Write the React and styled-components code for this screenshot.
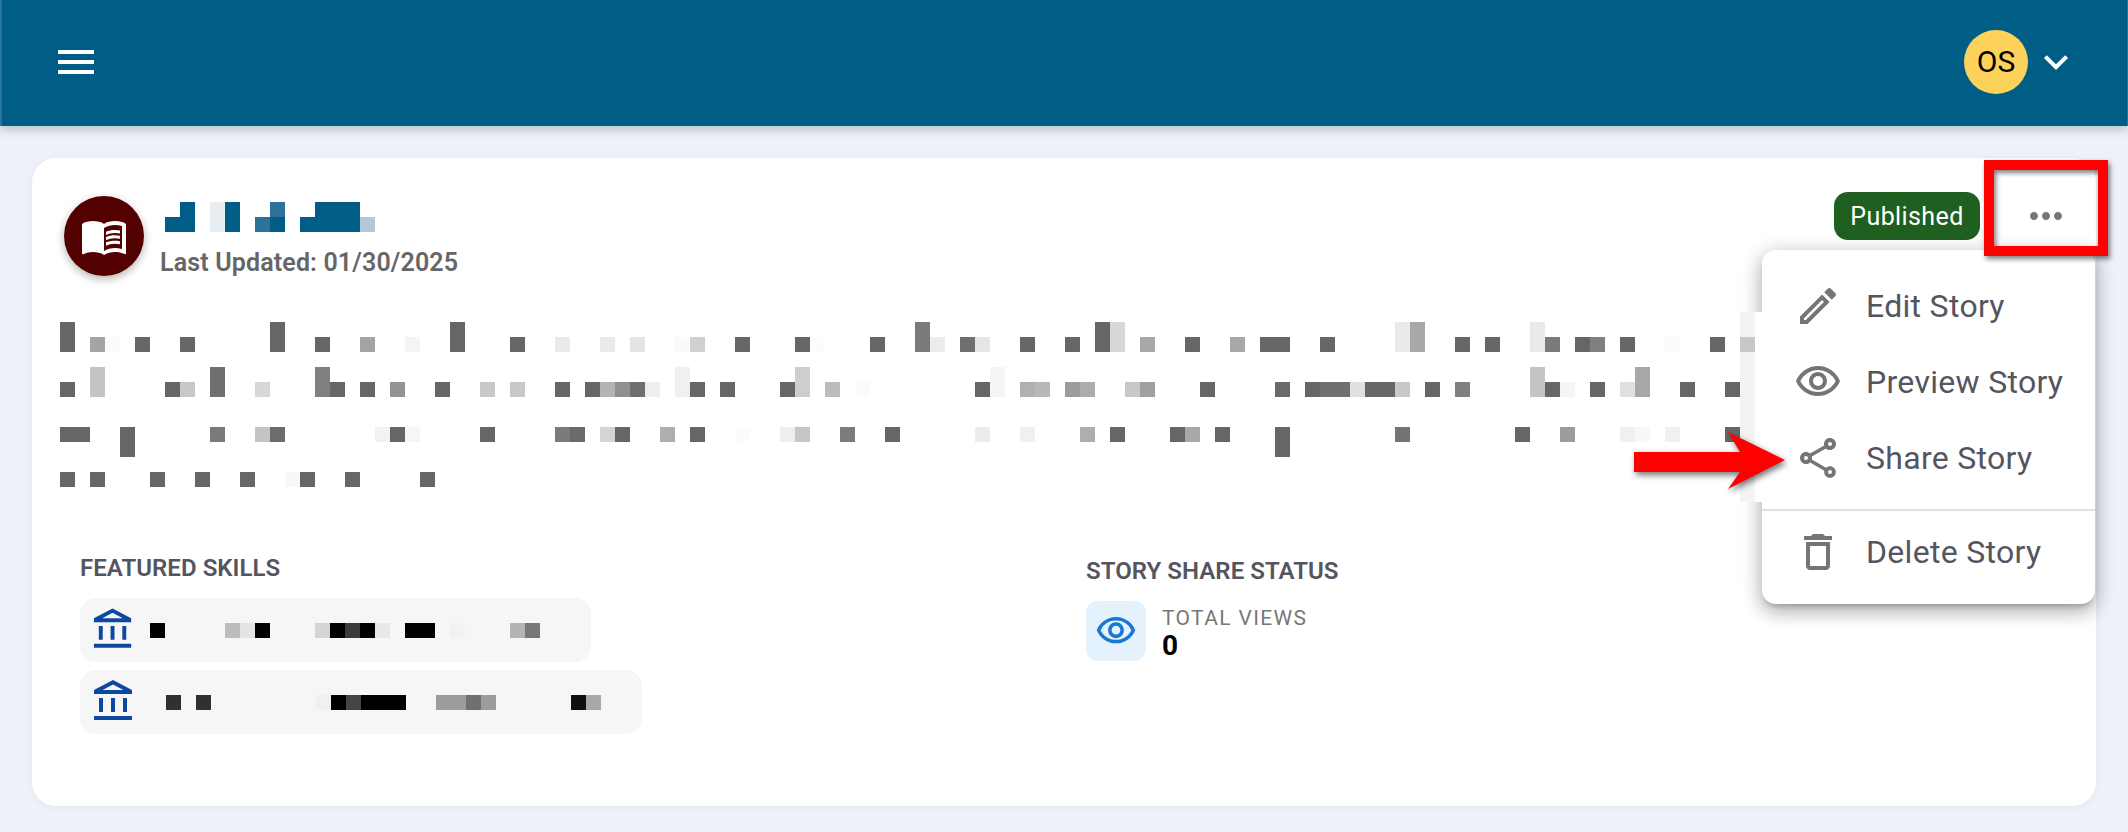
import styled, { createGlobalStyle } from "styled-components";
import {
  MdMenu,
  MdExpandMore,
  MdMenuBook,
  MdMoreHoriz,
  MdOutlineEdit,
  MdOutlineVisibility,
  MdOutlineShare,
  MdOutlineDelete,
  MdOutlineAccountBalance,
} from "react-icons/md";

const GlobalStyle = createGlobalStyle`
  html, body {
    margin: 0;
    padding: 0;
    background: #eef1f8;
    font-family: Roboto, "Liberation Sans", sans-serif;
  }
`;

const TopBar = styled.header`
  display: flex;
  justify-content: space-between;
  align-items: center;
  height: 126px;
  padding: 0 47px 2px 50px;
  box-sizing: border-box;
  background: #005d85;
  border-left: 2px solid #2a7699;
  border-right: 1px solid #2a7699;
  color: #fff;
  box-shadow: 0 3px 10px rgba(40, 50, 80, 0.28);
  position: relative;
`;
const UserMenu = styled.div`
  display: flex;
  align-items: center;
  gap: 4px;
`;
const Initials = styled.div`
  display: flex;
  align-items: center;
  justify-content: center;
  width: 64px;
  height: 64px;
  padding-bottom: 2px;
  box-sizing: border-box;
  border-radius: 50%;
  background: #fdd25a;
  color: #000;
  font-size: 30px;
`;

const Main = styled.main`
  padding: 32px 32px 26px;
`;
const Card = styled.section`
  position: relative;
  background: #fff;
  border-radius: 24px;
  padding: 34px 26px 72px 32px;
  box-shadow: 0 1px 6px rgba(40, 50, 80, 0.06);
`;
const CardTop = styled.div`
  display: flex;
  justify-content: space-between;
  align-items: flex-start;
`;
const StoryInfo = styled.div`
  display: flex;
  gap: 16px;
  height: 80px;
  margin-top: 4px;
`;
const StoryAvatar = styled.div`
  display: flex;
  align-items: center;
  justify-content: center;
  width: 80px;
  height: 80px;
  border-radius: 50%;
  background: #520000;
  color: #fff;
  box-shadow: 0 3px 8px rgba(0, 0, 0, 0.3);
`;
const StoryText = styled.div`
  padding-top: 6px;
`;
const Updated = styled.div`
  margin-top: 16px;
  font-size: 25px;
  line-height: 30px;
  font-weight: 600;
  letter-spacing: 0.15px;
  color: #666;
`;
const TitleMosaic = styled.svg`
  display: block;
  margin-left: 5px;
`;
const StoryActions = styled.div`
  display: flex;
  align-items: center;
  gap: 42px;
`;
const StatusChip = styled.div`
  display: flex;
  align-items: center;
  justify-content: center;
  width: 146px;
  height: 48px;
  border-radius: 14px;
  background: #1f5f20;
  color: #fff;
  font-size: 25px;
  letter-spacing: 0.4px;
`;
const DotsButton = styled.div`
  display: flex;
  color: #757575;
`;

const BodyMosaic = styled.svg`
  display: block;
  position: relative;
  z-index: 2;
  margin: 36px 0 0 -4px;
`;

const Sections = styled.div`
  display: grid;
  grid-template-columns: 1006px 1fr;
  margin: 51px 0 0 16px;
`;
const SectionTitle = styled.h3`
  margin: 0 0 15px;
  padding-top: ${(p) => p.$offset || 0}px;
  font-size: 24px;
  line-height: 30px;
  font-weight: 600;
  letter-spacing: 0.05px;
  color: #55555f;
`;
const SkillList = styled.div`
  display: flex;
  flex-direction: column;
  align-items: flex-start;
  gap: 8px;
`;
const SkillChip = styled.div`
  display: flex;
  align-items: center;
  width: ${(p) => p.$width}px;
  height: 64px;
  padding-left: 10px;
  gap: 13px;
  box-sizing: border-box;
  border-radius: 16px;
  background: #f6f6f6;
  color: #0d47a1;
`;
const Stat = styled.div`
  display: flex;
  gap: 16px;
  margin-top: 1px;
`;
const StatTile = styled.div`
  display: flex;
  align-items: center;
  justify-content: center;
  width: 60px;
  height: 60px;
  border-radius: 12px;
  background: #e3f2fd;
  color: #1976d2;
`;
const StatLabel = styled.div`
  margin-top: 4px;
  font-size: 21px;
  line-height: 26px;
  letter-spacing: 1.35px;
  color: #777;
`;
const StatValue = styled.div`
  font-size: 28px;
  line-height: 30px;
  font-weight: 700;
  color: #000;
`;

const ActionMenu = styled.div`
  position: absolute;
  z-index: 1;
  top: 92px;
  right: 1px;
  width: 333px;
  padding: 18px 0 14px;
  box-sizing: border-box;
  border-radius: 14px;
  background: #fff;
  box-shadow: 0 5px 5px -3px rgba(0, 0, 0, 0.2), 0 8px 18px 1px rgba(0, 0, 0, 0.2),
    0 3px 22px 2px rgba(0, 0, 0, 0.14);
`;
const MenuRow = styled.div`
  display: flex;
  align-items: center;
  gap: 24px;
  height: 76px;
  padding-left: 32px;
  font-size: 32px;
  letter-spacing: 0.3px;
  color: #55555f;
  & > svg {
    color: #757575;
    flex: none;
  }
`;
const MenuDivider = styled.hr`
  margin: 13px 0 3px;
  border: 0;
  height: 2px;
  background: #e0e0e0;
`;

const RedBox = styled.div`
  position: absolute;
  z-index: 4;
  left: 1952px;
  top: 2px;
  width: 124px;
  height: 96px;
  box-sizing: border-box;
  border: 10px solid #f00;
  box-shadow: 2px 3px 5px rgba(0, 0, 0, 0.5), inset 2px 3px 5px rgba(0, 0, 0, 0.5);
`;
const RedArrow = styled.svg`
  position: absolute;
  z-index: 4;
  left: 1602px;
  top: 274px;
  overflow: visible;
  filter: drop-shadow(2px 3px 3px rgba(0, 0, 0, 0.55));
`;

const gray = (s) => `#${s}${s}${s}`;

// redacted text, T = tall cell, U = tall with the same shade up top
const bodyLines = [
  { top: 10, low: 25, cells: "0T66 2a4 3fb 566 866 14T66 1766 20a4 23f4 26T66 3066 33ea 36ea 38e4 41fa 42d0 4566 4966 50fc 5466 57U7a 58ec 606f 61e6 6466 6766 69T66 70Td8 72a8 7566 78a8 8066 8166 8466 89Tea 90Ta8 9366 9566 98Tea 997a 10166 10280 10466 107fb 11066 112c8" },
  { top: 55, low: 70, cells: "066 2Uc4 766 8c8 10U70 13d8 17U80 1866 2066 2294 2566 28c8 30c8 3366 3566 36b4 3790 386f 39ee 41Tf0 4266 4466 4866 49Tce 51bc 53fb 6166 62Tf5 64b0 65b8 679c 68ac 71c8 72a0 7666 816a 8366 8470 8570 86e0 8766 8866 89c8 9166 9380 98Uc4 9966 100f5 10266 104e0 105Ua8 10866 11166" },
];

const parseLine = ({ top, low, cells }) =>
  cells.split(" ").flatMap((c) => {
    const m = c.match(/^(\d+?)([TU]?)([0-9a-f]{2})$/);
    const col = +m[1];
    const out = [[col * 15, low, gray(m[3])]];
    if (m[2]) out.push([col * 15, top, gray(m[3])]);
    return out;
  });

const row3 = [
  [0, "66"], [1, "66"], [4, "66"], [10, "7a"], [13, "c4"], [14, "6c"], [21, "f2"], [22, "66"], [23, "f6"],
  [28, "66"], [33, "7a"], [34, "6a"], [36, "d4"], [37, "66"], [40, "ae"], [42, "66"], [45, "fc"], [48, "ee"],
  [49, "c6"], [52, "7c"], [55, "66"], [61, "ec"], [64, "f0"], [68, "ae"], [70, "66"], [74, "66"], [75, "a8"],
  [77, "66"], [81, "66"], [89, "74"], [97, "66"], [100, "9c"], [104, "f0"], [105, "f8"], [107, "f0"], [111, "66"],
].map(([c, s]) => [c * 15, 115, gray(s)]);

const row4 = [
  [0, "66"], [2, "66"], [6, "66"], [9, "66"], [12, "66"], [15, "f8"], [16, "66"], [19, "66"], [24, "66"],
].map(([c, s]) => [c * 15, 160, gray(s)]);

const bodyCells = [
  ...parseLine(bodyLines[0]),
  ...parseLine(bodyLines[1]),
  ...row3,
  [4 * 15, 130, gray("66")],
  [81 * 15, 130, gray("66")],
  ...row4,
];

const titleCells = [
  [15, 0, "#005d85"], [45, 0, "#e9eef2"], [60, 0, "#005d85"], [105, 0, "#2f7299"],
  [150, 0, "#005d85"], [165, 0, "#005d85"], [180, 0, "#005d85"],
  [0, 15, "#005d85"], [15, 15, "#005d85"], [45, 15, "#e9eef2"], [60, 15, "#005d85"],
  [90, 15, "#2f7299"], [105, 15, "#005d85"], [135, 15, "#005d85"], [150, 15, "#005d85"],
  [165, 15, "#005d85"], [180, 15, "#005d85"], [195, 15, "#b2c9d9"],
];

const skillCells = (list) => list.map(([c, s]) => [c * 15, 0, gray(s)]);
const skills = [
  {
    width: 511,
    cells: skillCells([
      [0, "00"], [5, "bc"], [6, "e4"], [7, "00"], [11, "d4"], [12, "00"], [13, "3c"], [14, "00"], [15, "e8"],
      [17, "00"], [18, "00"], [20, "f2"], [24, "b4"], [25, "78"],
    ]),
  },
  {
    width: 562,
    cells: skillCells([
      [1, "30"], [3, "30"], [11, "f0"], [12, "00"], [13, "44"], [14, "00"], [15, "00"], [16, "00"], [19, "9c"],
      [20, "9c"], [21, "70"], [22, "9c"], [28, "10"], [29, "a8"],
    ]),
  },
];

const Cells = ({ cells }) =>
  cells.map(([x, y, fill], i) => <rect key={i} x={x} y={y} width="15" height="15" fill={fill} />);

const menuItems = [
  { icon: MdOutlineEdit, label: "Edit Story" },
  { icon: MdOutlineVisibility, label: "Preview Story" },
  { icon: MdOutlineShare, label: "Share Story" },
];

const App = () => {
  return (
    <>
      <GlobalStyle />
      <TopBar>
        <MdMenu size={48} />
        <UserMenu>
          <Initials>OS</Initials>
          <MdExpandMore size={48} />
        </UserMenu>
      </TopBar>
      <Main>
        <Card>
          <CardTop>
            <StoryInfo>
              <StoryAvatar>
                <MdMenuBook size={48} />
              </StoryAvatar>
              <StoryText>
                <TitleMosaic width="210" height="30" shapeRendering="crispEdges">
                  <Cells cells={titleCells} />
                </TitleMosaic>
                <Updated>Last Updated: 01/30/2025</Updated>
              </StoryText>
            </StoryInfo>
            <StoryActions>
              <StatusChip>Published</StatusChip>
              <DotsButton>
                <MdMoreHoriz size={48} />
              </DotsButton>
            </StoryActions>
          </CardTop>

          <BodyMosaic width="1702" height="190" shapeRendering="crispEdges">
            <rect x="1680" width="15" height="190" fill="#f3f3f3" />
            <rect x="1695" width="7" height="190" fill="#fff" />
            <Cells cells={bodyCells} />
          </BodyMosaic>

          <Sections>
            <div>
              <SectionTitle>FEATURED SKILLS</SectionTitle>
              <SkillList>
                {skills.map((skill) => (
                  <SkillChip key={skill.width} $width={skill.width}>
                    <MdOutlineAccountBalance size={48} />
                    <svg width="450" height="15" shapeRendering="crispEdges">
                      <Cells cells={skill.cells} />
                    </svg>
                  </SkillChip>
                ))}
              </SkillList>
            </div>
            <div>
              <SectionTitle $offset={3}>STORY SHARE STATUS</SectionTitle>
              <Stat>
                <StatTile>
                  <MdOutlineVisibility size={42} />
                </StatTile>
                <div>
                  <StatLabel>TOTAL VIEWS</StatLabel>
                  <StatValue>0</StatValue>
                </div>
              </Stat>
            </div>
          </Sections>

          <ActionMenu>
            {menuItems.map(({ icon: Icon, label }) => (
              <MenuRow key={label}>
                <Icon size={48} />
                {label}
              </MenuRow>
            ))}
            <MenuDivider />
            <MenuRow>
              <MdOutlineDelete size={48} />
              Delete Story
            </MenuRow>
          </ActionMenu>

          <RedBox />
          <RedArrow width="151" height="57" viewBox="0 0 151 57">
            <polygon points="94,0 151,28 94,57 106,40 0,40 0,20 106,20" fill="#f00" />
          </RedArrow>
        </Card>
      </Main>
    </>
  );
};

export default App;
